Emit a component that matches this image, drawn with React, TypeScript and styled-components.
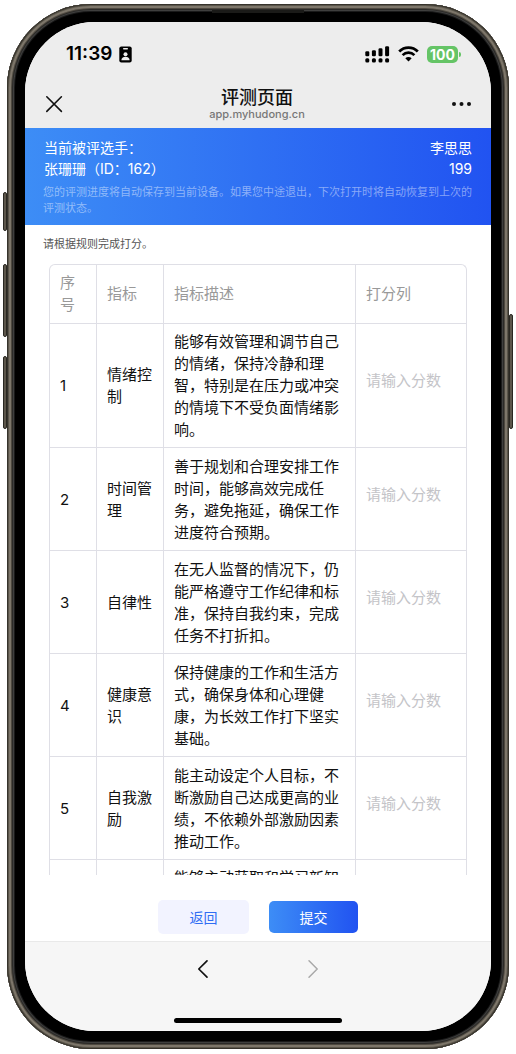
import React from "react";
import styled, { createGlobalStyle } from "styled-components";

const GlobalStyle = createGlobalStyle`
  *, *::before, *::after { box-sizing: border-box; }
  body {
    margin: 0;
    background: #fff;
    color: #111;
    font-family: Inter, "Noto Sans CJK SC", sans-serif;
  }
  button, input { font-family: inherit; }
`;

const Stage = styled.div`
  height: 100vh;
  padding: 4px 7px 5px;
`;

const Phone = styled.div`
  position: relative;
  height: 100%;
  padding: 18px;
  border-radius: 84px;
  background: #000;
  box-shadow:
    inset 0 0 0 1px #36332c,
    inset 0 0 0 2px #5a554a,
    inset 0 0 0 4px #7d766a,
    inset 0 0 0 5px #4e4940,
    inset 0 0 0 6px #2b2a28,
    inset 0 0 0 7px #3f3f3e,
    inset 0 0 0 8px #1a1a1a;
`;

const SideKey = styled.span<{ $side: "left" | "right"; $top: number; $length: number }>`
  position: absolute;
  ${(p) => p.$side}: -4px;
  top: ${(p) => p.$top}px;
  width: 4px;
  height: ${(p) => p.$length}px;
  border: 1px solid #2a2822;
  border-radius: 2px;
  background: #5c564b;
`;

const Speaker = styled.span`
  position: absolute;
  top: 6px;
  left: 50%;
  width: 92px;
  height: 3px;
  margin-left: -46px;
  background: #1a1a18;
`;

const Screen = styled.div`
  display: flex;
  flex-direction: column;
  height: 100%;
  overflow: hidden;
  border-radius: 70px;
  background: #fff;
`;

const StatusBar = styled.div`
  display: flex;
  justify-content: space-between;
  align-items: center;
  flex: none;
  height: 64px;
  padding: 0 30px 0 41px;
  background: #ededed;
`;

const StatusGroup = styled.div<{ $gap: number }>`
  display: flex;
  align-items: center;
  gap: ${(p) => p.$gap}px;
`;

const Clock = styled.time`
  font-size: 19px;
  font-weight: 600;
  line-height: 24px;
  color: #000;
`;

const NavBar = styled.header`
  display: flex;
  justify-content: space-between;
  align-items: center;
  height: 42px;
  padding: 0 19px 6px 20px;
  background: #ededed;
  flex: none;
`;

const IconButton = styled.button`
  display: flex;
  padding: 0;
  border: 0;
  background: none;
  color: #111;
  &:disabled { color: #a9a9a9; }
`;

const PageTitle = styled.div`
  text-align: center;
`;

const TitleText = styled.h1`
  margin: 0;
  font-size: 18px;
  font-weight: 500;
  line-height: 20px;
`;

const Domain = styled.p`
  margin: 0;
  font-size: 11px;
  font-weight: 500;
  line-height: 12px;
  color: #777;
`;

const Banner = styled.section`
  flex: none;
  padding: 9px 18px;
  background: linear-gradient(90deg, #3d8df6, #2f70f3 50%, #2153f1);
  color: #fff;
`;

const BannerRow = styled.div`
  display: flex;
  justify-content: space-between;
  padding: 0 1px;
  font-size: 14px;
  line-height: 21px;
`;

const Notice = styled.p`
  margin: 5px 0 0;
  font-size: 11px;
  line-height: 16px;
  color: rgba(255, 255, 255, 0.45);
`;

const Content = styled.main`
  flex: 1;
  min-height: 0;
  display: flex;
  flex-direction: column;
`;

const Hint = styled.p`
  margin: 0;
  padding: 11px 18px 12px;
  font-size: 11px;
  line-height: 16px;
  color: #555;
`;

const ScrollArea = styled.div`
  flex: 1;
  min-height: 0;
  overflow-y: auto;
  scrollbar-width: none;
  padding: 0 24px;
`;

const ScoreTable = styled.table`
  width: 100%;
  table-layout: fixed;
  border-collapse: separate;
  border-spacing: 0;
  border: 1px solid #dfdfe6;
  border-bottom: 0;
  border-radius: 6px;
  font-size: 15px;
  line-height: 22px;
`;

const Col = styled.col<{ $width: string }>`
  width: ${(p) => p.$width};
`;

const HeadCell = styled.th`
  height: 59px;
  padding: 7px 10px;
  border-right: 1px solid #dfdfe6;
  border-bottom: 1px solid #dfdfe6;
  font-weight: 400;
  text-align: left;
  color: #999;
  &:last-child { border-right: 0; }
`;

const Cell = styled.td`
  height: 103px;
  padding: 7px 10px 6px;
  border-right: 1px solid #dfdfe6;
  border-bottom: 1px solid #dfdfe6;
  vertical-align: middle;
  &:last-child { border-right: 0; }
`;

const LoadingCell = styled(Cell)`
  vertical-align: top;
`;

const InputCell = styled(Cell)`
  padding-bottom: 17px;
`;

const ScoreInput = styled.input`
  display: block;
  width: 100%;
  height: 24px;
  padding: 0;
  border: 0;
  outline: 0;
  background: none;
  font-size: 15px;
  &::placeholder { color: #c4c4c8; opacity: 1; }
`;

const Actions = styled.div`
  display: flex;
  justify-content: center;
  align-items: center;
  gap: 20px;
  flex: none;
  padding: 25px 0 7px;
`;

const ActionButton = styled.button<{ $primary?: boolean }>`
  width: ${(p) => (p.$primary ? 89 : 91)}px;
  height: ${(p) => (p.$primary ? 32 : 34)}px;
  padding: 0;
  border: 0;
  border-radius: 5px;
  background: ${(p) => (p.$primary ? "linear-gradient(90deg, #3d8df6, #2153f1)" : "#f2f3ff")};
  color: ${(p) => (p.$primary ? "#fff" : "#2f6df3")};
  font-size: 14px;
`;

const BrowserBar = styled.footer`
  flex: none;
  display: flex;
  flex-direction: column;
  align-items: center;
  justify-content: space-between;
  height: 90px;
  padding: 17px 0 8px;
  border-top: 1px solid #e9e9e9;
  background: #f6f6f6;
`;

const BrowserNav = styled.nav`
  display: flex;
  gap: 90px;
`;

const HomeIndicator = styled.div`
  width: 36%;
  height: 5px;
  border-radius: 3px;
  background: #000;
`;

const rows = [
  { name: "情绪控制", text: "能够有效管理和调节自己的情绪，保持冷静和理智，特别是在压力或冲突的情境下不受负面情绪影响。" },
  { name: "时间管理", text: "善于规划和合理安排工作时间，能够高效完成任务，避免拖延，确保工作进度符合预期。" },
  { name: "自律性", text: "在无人监督的情况下，仍能严格遵守工作纪律和标准，保持自我约束，完成任务不打折扣。" },
  { name: "健康意识", text: "保持健康的工作和生活方式，确保身体和心理健康，为长效工作打下坚实基础。" },
  { name: "自我激励", text: "能主动设定个人目标，不断激励自己达成更高的业绩，不依赖外部激励因素推动工作。" },
];

const BadgeIcon = () => (
  <svg width="13" height="17" viewBox="0 0 13 17" aria-hidden="true">
    <rect x="0.3" y="0.5" width="12.4" height="16" rx="2" fill="#000" />
    <rect x="4" y="2" width="5" height="1.4" rx="0.7" fill="#ededed" />
    <circle cx="6.5" cy="8.2" r="2" fill="#ededed" />
    <path d="M2.4 14.2c0-2.2 1.6-3.4 4.1-3.4s4.1 1.2 4.1 3.4z" fill="#ededed" />
  </svg>
);

const SignalIcon = () => (
  <svg width="25" height="17" viewBox="0 0 25 17" aria-hidden="true">
    {[5, 4, 2, 0].map((top, i) => (
      <g key={top}>
        <rect x={0.3 + i * 6.6} y={top + 0.3} width="4" height={10 - top} rx="1.3" />
        <rect x={0.3 + i * 6.6} y="12.2" width="4" height="4.2" rx="1.5" />
      </g>
    ))}
  </svg>
);

const WifiIcon = () => (
  <svg width="21" height="16" viewBox="0 0 21 16" fill="none" stroke="#000" aria-hidden="true">
    <path d="M1.2 5.5C6.4.4 14.6.4 19.8 5.5" strokeWidth="2.8" />
    <path d="M4.6 9.1c3.3-3.2 8.5-3.2 11.8 0" strokeWidth="2.7" />
    <path d="M10.5 15.4 7.3 12.2c1.8-1.7 4.6-1.7 6.4 0z" fill="#000" stroke="none" />
  </svg>
);

const BatteryShell = styled.span`
  position: relative;
  display: block;
  width: 31px;
  height: 17px;
  margin-right: 3px;
  border-radius: 5px;
  background: #65c466;
  color: #fff;
  font-size: 14px;
  font-weight: 700;
  line-height: 17px;
  text-align: center;
  &::after {
    content: "";
    position: absolute;
    right: -3px;
    top: 6px;
    width: 2px;
    height: 5px;
    border-radius: 0 2px 2px 0;
    background: #65c466;
  }
`;

export default function App() {
  return (
    <Stage>
      <GlobalStyle />
      <Phone>
        <SideKey $side="left" $top={188} $length={39} />
        <SideKey $side="left" $top={260} $length={73} />
        <SideKey $side="left" $top={352} $length={73} />
        <SideKey $side="right" $top={310} $length={115} />
        <Speaker />
        <Screen>
          <StatusBar>
            <StatusGroup $gap={7}>
              <Clock>11:39</Clock>
              <BadgeIcon />
            </StatusGroup>
            <StatusGroup $gap={8}>
              <SignalIcon />
              <WifiIcon />
              <BatteryShell>100</BatteryShell>
            </StatusGroup>
          </StatusBar>
          <NavBar>
            <IconButton type="button" aria-label="关闭">
              <svg width="18" height="18" viewBox="0 0 18 18" fill="none" stroke="currentColor" strokeWidth="1.6" strokeLinecap="round">
                <path d="M1.8 1.8 16.4 16.4M16.4 1.8 1.8 16.4" />
              </svg>
            </IconButton>
            <PageTitle>
              <TitleText>评测页面</TitleText>
              <Domain>app.myhudong.cn</Domain>
            </PageTitle>
            <IconButton type="button" aria-label="更多">
              <svg width="21" height="6" viewBox="0 0 21 6" fill="currentColor">
                <circle cx="3" cy="3" r="2" />
                <circle cx="10.5" cy="3" r="2" />
                <circle cx="18" cy="3" r="2" />
              </svg>
            </IconButton>
          </NavBar>
          <Banner>
            <BannerRow>
              <span>当前被评选手：</span>
              <span>李思思</span>
            </BannerRow>
            <BannerRow>
              <span>张珊珊（ID：162）</span>
              <span>199</span>
            </BannerRow>
            <Notice>您的评测进度将自动保存到当前设备。如果您中途退出，下次打开时将自动恢复到上次的评测状态。</Notice>
          </Banner>
          <Content>
            <Hint>请根据规则完成打分。</Hint>
            <ScrollArea>
              <ScoreTable>
                <colgroup>
                  <Col $width="47px" />
                  <Col $width="67px" />
                  <Col $width="auto" />
                  <Col $width="110px" />
                </colgroup>
                <thead>
                  <tr>
                    <HeadCell scope="col">序号</HeadCell>
                    <HeadCell scope="col">指标</HeadCell>
                    <HeadCell scope="col">指标描述</HeadCell>
                    <HeadCell scope="col">打分列</HeadCell>
                  </tr>
                </thead>
                <tbody>
                  {rows.map((row, i) => (
                    <tr key={row.name}>
                      <Cell>{i + 1}</Cell>
                      <Cell>{row.name}</Cell>
                      <Cell>{row.text}</Cell>
                      <InputCell>
                        <ScoreInput aria-label={row.name} placeholder="请输入分数" inputMode="numeric" />
                      </InputCell>
                    </tr>
                  ))}
                  <tr>
                    <LoadingCell />
                    <LoadingCell />
                    <LoadingCell>能够主动获取和学习新知</LoadingCell>
                    <LoadingCell />
                  </tr>
                </tbody>
              </ScoreTable>
            </ScrollArea>
          </Content>
          <Actions>
            <ActionButton type="button">返回</ActionButton>
            <ActionButton type="submit" $primary>提交</ActionButton>
          </Actions>
          <BrowserBar>
            <BrowserNav>
              <IconButton type="button" aria-label="后退">
                <svg width="20" height="20" viewBox="0 0 20 20" fill="none" stroke="currentColor" strokeWidth="1.7" strokeLinecap="round" strokeLinejoin="round">
                  <path d="M14 1.8 5.8 10 14 18.2" />
                </svg>
              </IconButton>
              <IconButton type="button" aria-label="前进" disabled>
                <svg width="20" height="20" viewBox="0 0 20 20" fill="none" stroke="currentColor" strokeWidth="1.5" strokeLinecap="round" strokeLinejoin="round">
                  <path d="M6 1.8 14.2 10 6 18.2" />
                </svg>
              </IconButton>
            </BrowserNav>
            <HomeIndicator />
          </BrowserBar>
        </Screen>
      </Phone>
    </Stage>
  );
}
